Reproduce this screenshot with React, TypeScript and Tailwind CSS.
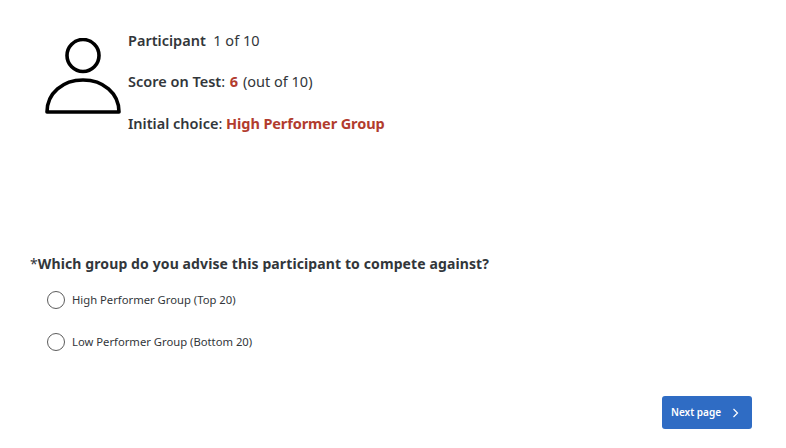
function RadioRow({ label }: { label: string }) {
  return (
    <label className="flex items-center h-[18px] pl-[47px]">
      <span className="w-[18px] h-[18px] rounded-full border border-[#5c5c5c] bg-white shrink-0"></span>
      <span className="ml-[7px] text-[11.25px] text-[#32363a]">{label}</span>
    </label>
  );
}

function App() {
  return (
    <div className="w-[786px] h-[448px] bg-white overflow-hidden font-['Noto_Sans',sans-serif] text-[#32363a]">
      <div className="flex pt-[38px] pl-[45px] h-[254px]">
        <svg width="76" height="76" viewBox="0 0 76 76" fill="none" stroke="#000" strokeWidth="3.6">
          <circle cx="38" cy="17.5" r="16" />
          <path d="M2 74 C2 55 18 42 38 42 C58 42 74 55 74 74 Z" strokeLinejoin="round" />
        </svg>
        <div className="ml-[7px] -mt-[8px] flex flex-col gap-[20px] text-[14.5px] leading-[21px]">
          <p>
            <span className="font-semibold">Participant</span>&nbsp; 1 of 10
          </p>
          <p>
            <span className="font-semibold">Score on Test</span>:{" "}
            <span className="font-bold text-[#b23c2e] ml-[1px]">6</span>{" "}
            <span className="ml-[1px]">(out of 10)</span>
          </p>
          <p className="mt-[1px]">
            <span className="font-semibold">Initial choice</span>:{" "}
            <span className="font-bold text-[#b23c2e] tracking-[-0.1px]">High Performer Group</span>
          </p>
        </div>
      </div>
      <h2 className="pl-[30px] text-[14px] leading-[20px] font-bold tracking-[0.11px]">
        <span className="font-normal">*</span>Which group do you advise this participant to compete against?
      </h2>
      <div className="mt-[17px] flex flex-col gap-[24px]">
        <RadioRow label="High Performer Group (Top 20)" />
        <RadioRow label="Low Performer Group (Bottom 20)" />
      </div>
      <div className="flex justify-end pr-[34px] mt-[45px]">
        <button className="w-[90px] h-[33px] rounded-[3px] bg-[#2f6cc4] text-white text-[10px] font-semibold flex items-center pl-[9px]">
          Next page
          <svg className="ml-[11px]" width="7" height="10" viewBox="0 0 7 10" fill="none" stroke="#fff" strokeWidth="1.2">
            <path d="M1.5 1 L5.5 5 L1.5 9" />
          </svg>
        </button>
      </div>
    </div>
  );
}

export default App;
